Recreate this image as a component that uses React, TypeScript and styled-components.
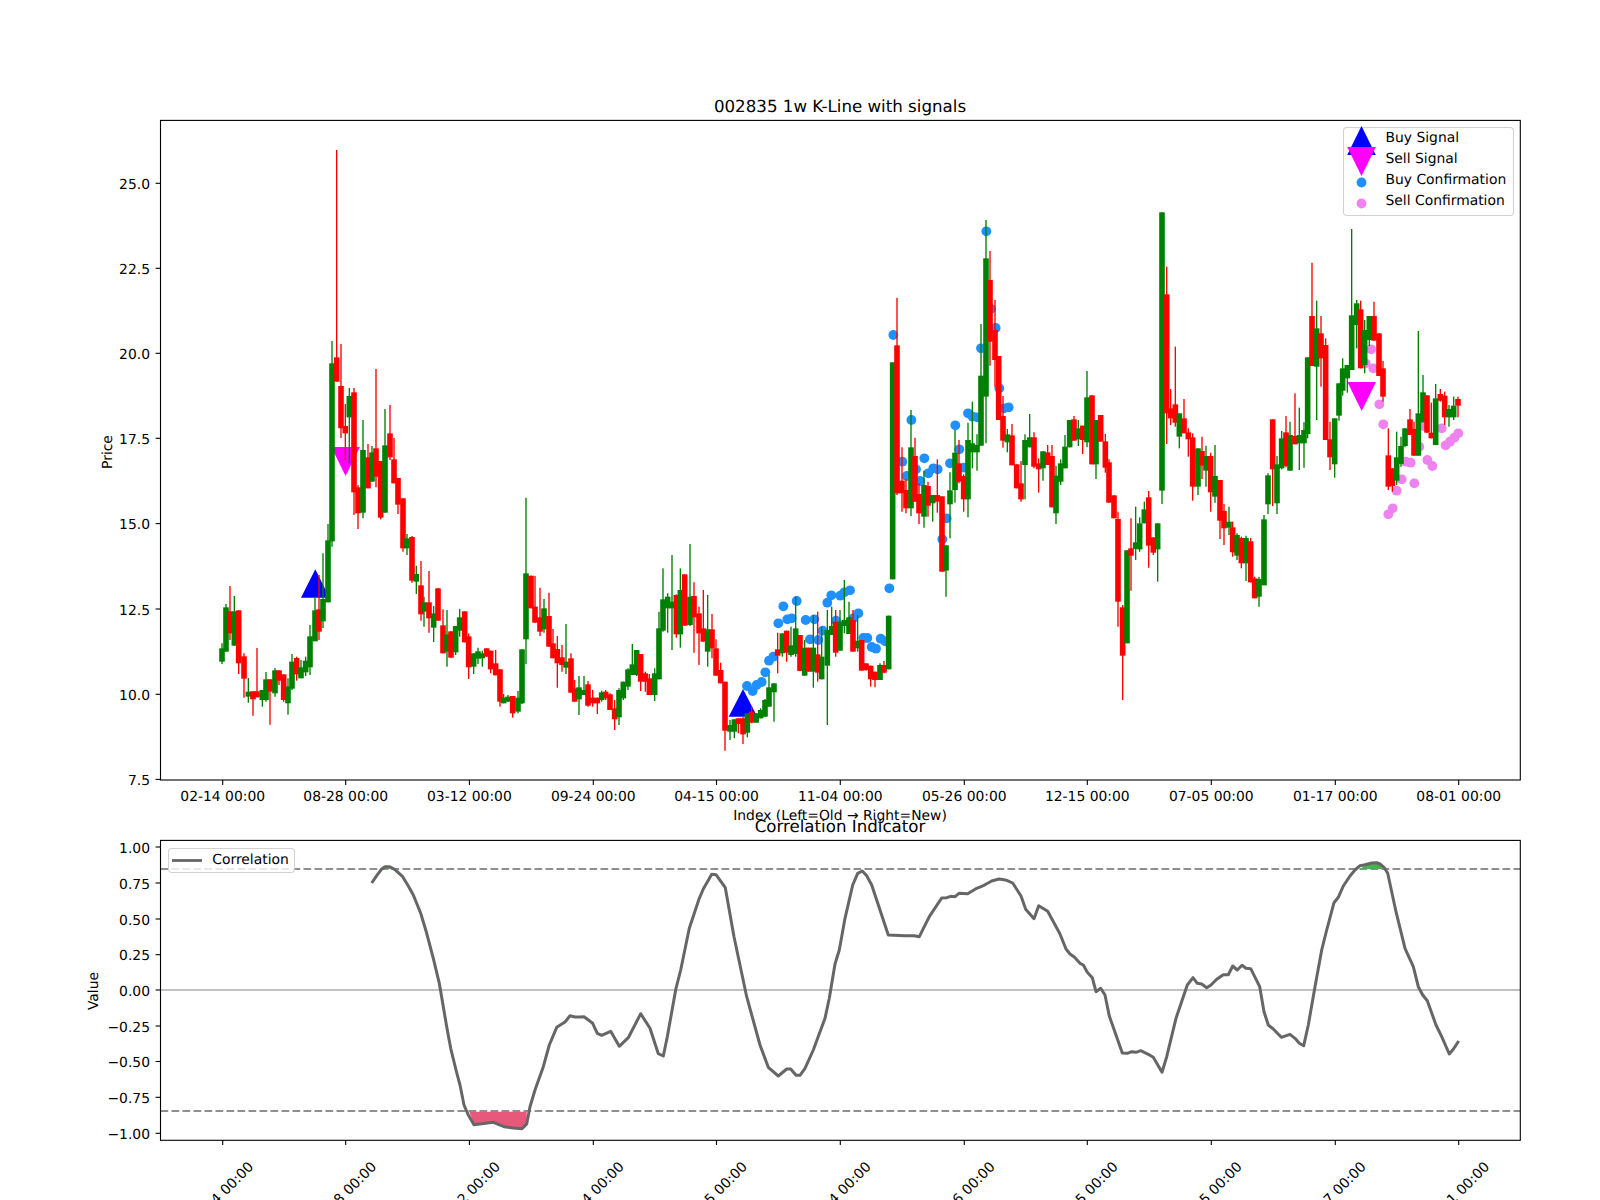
import styled, { createGlobalStyle } from 'styled-components';

type Candle = { x: number; wickTop: number; top: number; bottom: number; wickBottom: number; up: boolean };
type Point = [number, number];

const GlobalStyle = createGlobalStyle`
  html, body {
    margin: 0;
    background: #fff;
    overflow: hidden;
  }
  body {
    font-family: 'DejaVu Sans', 'Liberation Sans', sans-serif;
    color: #000;
    text-rendering: geometricPrecision;
  }
`;

const Figure = styled.main`
  width: 1600px;
  height: 1200px;
  display: flex;
  flex-direction: column;
  overflow: hidden;
  background: #fff;
`;

const Panel = styled.section<{ $height: number }>`
  position: relative;
  width: 1600px;
  height: ${({ $height }) => $height}px;
  flex: none;
`;

const Plot = styled.svg`
  display: block;
  width: 100%;
  height: 100%;
  overflow: visible;
`;

const AxesFrame = styled.rect`
  fill: none;
  stroke: #000;
  stroke-width: 1.1;
`;

const Tick = styled.line`
  stroke: #000;
  stroke-width: 1.1;
`;

const TickText = styled.text`
  font-family: 'DejaVu Sans', sans-serif;
  font-size: 13.89px;
  fill: #000;
`;

const AxisTitle = styled.text`
  font-family: 'DejaVu Sans', sans-serif;
  font-size: 16.67px;
  fill: #000;
  text-anchor: middle;
`;

const Wick = styled.line<{ $up: boolean }>`
  stroke: ${({ $up }) => ($up ? '#008000' : '#ff0000')};
  stroke-width: 1.35;
`;

const Body = styled.rect<{ $up: boolean }>`
  fill: ${({ $up }) => ($up ? '#008000' : '#ff0000')};
`;

const Threshold = styled.line`
  stroke: #8f8f8f;
  stroke-width: 2;
  stroke-dasharray: 7.7 3.3;
`;

const ZeroLine = styled.line`
  stroke: #adadad;
  stroke-width: 1.6;
`;

const Correlation = styled.polyline`
  fill: none;
  stroke: #666;
  stroke-width: 3;
  stroke-linejoin: round;
`;

const Legend = styled.div`
  position: absolute;
  box-sizing: border-box;
  background: rgba(255, 255, 255, 0.8);
  border: 1px solid rgba(204, 204, 204, 0.9);
  border-radius: 4px;
`;

const PriceLegend = styled(Legend)`
  left: 1342.5px;
  top: 127px;
  width: 171px;
  height: 88.5px;

  & > :first-child {
    margin-top: -1px;
  }
`;

const CorrelationLegend = styled(Legend)`
  left: 167.5px;
  top: 27.5px;
  width: 127px;
  height: 25px;
  display: flex;
  align-items: center;
`;

const LegendRow = styled.div`
  display: flex;
  align-items: center;
  height: 21px;
  font-size: 13.89px;
  white-space: nowrap;
`;

const LegendKey = styled.svg`
  width: 37px;
  height: 21px;
  margin-right: 5px;
  flex: none;
  overflow: visible;
`;

const LineKey = styled.svg`
  width: 30px;
  height: 21px;
  margin: 0 10.8px 0 3px;
  flex: none;
`;

const parseCandles = (x0: number, y0: number, rows: string): Candle[] =>
  rows
    .trim()
    .split('\n')
    .map((row) => {
      const [kind, ...nums] = row.trim().split(' ');
      const [z, wt, t, b, wb] = nums.map(Number);
      return {
        x: x0 + z / 3,
        wickTop: y0 + wt / 3,
        top: y0 + t / 3,
        bottom: y0 + b / 3,
        wickBottom: y0 + wb / 3,
        up: kind === 'g',
      };
    });

const pts = (x0: number, y0: number, list: string): Point[] =>
  list
    .trim()
    .split(/\s+/)
    .map((p) => {
      const [x, y] = p.split(',').map(Number);
      return [x0 + x / 3, y0 + y / 3] as Point;
    });

const toAttr = (list: Point[]) => list.map(([x, y]) => `${x.toFixed(1)},${y.toFixed(1)}`).join(' ');

const candles: Candle[] = [
  ...parseCandles(150, 400, `
    g 216 730 745 785 792
    g 228 612 622 755 755
    r 240 558 634 700 720
    g 253 588 634 737 737
    r 266 631 631 790 822
    r 282 760 769 836 893
    g 295 834 875 890 908
    r 309 874 874 898 947
    r 321 744 874 892 892
    g 337 870 870 900 920
    g 348 816 838 900 905
    r 360 838 838 875 974
    g 375 804 811 880 890
    r 387 811 811 842 855
    r 401 823 823 900 905
    g 414 835 859 910 944
    g 426 762 785 866 870
    r 440 770 774 823 842
    g 453 780 802 835 835
    g 467 770 782 817 828
    g 480 675 709 802 825
    g 495 590 631 724 724
    r 507 525 628 695 720
    g 519 460 597 664 684
    g 534 372 421 607 607
    g 546 -177 -110 424 440
    r 560 -750 -128 -55 -55
    r 573 -168 -42 85 114
    r 586 12 78 100 180
    g 598 -36 -12 52 190
    r 612 -36 -23 277 345
    r 624 255 262 340 387
    g 639 60 150 338 355
    r 654 132 172 265 265
    g 666 138 157 245 245
    r 678 -93 145 230 262
    r 692 183 183 353 358
    g 705 27 136 338 338
    r 720 15 100 172 180
    r 732 114 178 250 250
    r 744 234 234 314 342
    r 759 295 295 445 455
    g 771 402 415 445 465
    r 786 408 411 542 548
    g 799 497 522 545 582
    r 813 483 556 643 662
    g 822 590 607 635 680
    r 837 513 607 655 698
    g 851 618 640 683 726
    r 864 565 565 662 662
    r 879 628 676 760 760
    g 891 630 703 755 800
    r 903 694 694 773 773
    g 917 678 678 757 765
    g 929 627 652 692 710
    r 944 634 634 727 727
    r 956 700 709 802 837
    g 971 760 760 800 822
    g 984 743 754 776 792
    g 997 752 760 775 800
    r 1010 745 745 770 770
    r 1022 752 752 808 820
    r 1037 750 790 826 826
    r 1050 808 808 905 920
    g 1061 882 893 910 910
    g 1074 885 890 905 905
    r 1088 888 888 940 953
    g 1104 873 893 935 940
    g 1116 748 748 910 912
    g 1128 293 520 718 792
    r 1143 527 527 625 625
    r 1155 528 620 668 668
    r 1170 563 652 695 708
    g 1182 597 625 688 698
    r 1197 578 648 740 740
    r 1209 687 730 775 775
    r 1222 708 747 790 863
    r 1236 735 772 795 815
    g 1248 672 785 803 822
    r 1263 760 775 878 878
    r 1274 840 865 905 905
    g 1287 828 862 898 945
    g 1302 828 870 885 885
    r 1314 843 853 917 920
    r 1328 870 893 910 920
    r 1342 893 893 910 942
  `),
  ...parseCandles(600, 500, `
    g 5 572 577 600 605
    r 17 570 575 595 600
    r 30 580 583 630 630
    r 44 600 625 658 690
    g 57 565 570 652 675
    g 70 545 545 595 600
    g 84 505 508 560 570
    g 97 432 493 525 525
    g 110 450 450 525 528
    r 122 462 462 545 573
    r 136 515 520 545 575
    r 148 522 535 585 585
    g 164 505 520 585 603
    g 177 335 385 538 538
    g 189 205 298 392 395
    g 203 280 290 325 398
    g 216 165 305 325 450
    r 229 283 285 403 413
    g 241 205 270 403 443
    r 254 223 223 377 377
    g 270 132 290 375 378
    r 282 247 288 352 458
    r 297 320 340 400 495
    r 310 270 385 425 425
    g 323 285 388 455 500
    r 336 342 388 445 475
    r 348 418 445 527 527
    r 362 488 510 550 550
    r 375 545 545 692 752
    g 390 660 675 695 720
    g 403 658 658 695 715
    r 415 655 655 672 700
    r 429 650 655 703 732
    g 442 640 640 698 712
    r 455 620 635 668 670
    g 469 640 640 668 668
    g 482 625 630 655 655
    g 495 597 600 650 650
    g 507 525 562 620 620
    g 522 550 550 577 665
    r 533 398 448 467 520
    g 547 400 400 460 470
    r 560 392 392 458 485
    g 573 380 436 465 470
    g 587 290 385 462 470
    r 600 405 405 513 513
    g 614 420 443 527 527
    r 626 443 443 515 515
    g 640 345 443 515 563
    r 653 335 463 518 545
    g 665 380 470 538 538
    g 682 330 390 497 675
    g 695 320 378 405 405
    r 707 330 365 458 470
    g 720 330 365 452 452
    g 733 240 360 378 400
    g 747 305 352 402 402
    r 759 330 360 455 455
    g 773 345 422 445 455
    r 785 420 420 512 512
    r 798 490 490 510 512
    r 812 497 497 538 560
    r 825 515 515 540 562
    g 840 490 495 540 540
    r 852 483 495 518 520
    g 866 347 347 508 508
  `),
  ...parseCandles(860, 200, `
    g 98 487 487 1138 1138
    r 111 293 436 880 885
    r 126 742 842 880 935
    r 138 838 870 925 940
    g 153 630 742 925 948
    r 165 713 768 905 905
    r 177 850 882 940 972
    g 192 812 855 950 983
    r 204 845 858 917 950
    g 218 885 885 910 965
    r 232 778 885 905 938
    r 246 889 889 1115 1115
    g 258 1036 1036 1112 1190
    g 270 817 871 913 1015
    g 285 690 758 870 908
    r 297 720 790 845 850
    r 311 823 828 898 935
    g 324 668 720 898 952
    g 337 605 730 757 805
    g 351 703 735 757 812
    g 363 372 527 737 737
    g 378 60 175 590 730
    r 390 153 240 425 497
    r 405 300 390 480 560
    r 416 468 468 660 660
    r 429 588 648 722 743
    g 442 687 703 727 757
    r 456 672 706 796 796
    r 470 793 793 865 865
    r 483 783 850 898 905
    g 495 703 720 795 898
    g 509 642 712 742 742
    r 522 697 712 800 805
    r 536 775 790 808 878
    g 549 754 754 805 842
    r 563 735 757 795 795
    r 576 735 768 922 922
    g 588 797 827 940 972
    g 602 778 790 845 855
    g 615 705 740 805 805
    g 629 660 660 742 742
    r 642 648 658 722 722
    g 655 660 685 718 738
    r 668 677 677 720 762
    g 681 513 592 727 742
    r 696 586 586 793 793
    g 708 660 660 793 837
    r 722 645 645 725 725
    r 736 702 724 803 818
    r 747 778 787 908 908
    r 762 886 886 955 955
  `),
  ...parseCandles(1100, 380, `
    r 54 395 417 665 740
    r 68 675 682 827 960
    g 81 511 511 790 790
  `),
  ...parseCandles(860, 200, `
    r 813 955 1045 1067 1172
    g 827 920 1027 1047 1080
    g 839 952 970 1048 1055
    g 853 905 928 970 970
    r 866 873 892 1037 1103
    r 880 1012 1012 1058 1065
    g 893 970 970 1048 1145
    g 906 37 37 872 912
    r 920 200 283 640 732
    r 932 567 625 655 675
    r 946 440 613 668 680
    g 958 640 640 710 745
  `),
  ...parseCandles(1100, 380, `
    r 252 57 115 160 160
    r 265 145 157 178 230
    r 278 160 172 320 362
    g 294 205 205 320 345
    r 306 170 213 257 297
    g 318 197 228 272 320
    r 332 218 228 337 395
    g 345 195 288 350 368
    r 360 300 300 422 477
    r 372 372 393 445 495
    g 387 380 425 443 465
    r 398 425 442 517 530
    g 411 460 465 527 540
    r 424 470 474 550 565
    g 438 467 474 550 603
    r 452 474 484 607 607
    r 464 590 595 655 655
    g 477 590 597 650 680
    g 492 405 418 616 616
    g 504 280 286 373 402
    r 518 118 118 268 378
    g 531 228 253 370 402
    g 545 153 175 265 268
    r 558 108 157 258 262
    g 570 125 165 272 272
    r 585 40 168 193 193
    g 598 83 165 190 270
    g 612 127 150 190 263
  `),
  ...parseCandles(1290, 210, `
    g 53 442 442 672 685
    r 66 158 318 468 468
    g 80 272 355 470 630
    r 93 318 370 445 530
    r 107 385 405 690 690
    r 120 635 688 742 780
    g 134 625 625 763 803
    g 147 520 520 617 632
    g 158 445 475 542 557
    g 172 465 465 505 548
    g 185 57 316 480 480
    g 200 270 280 345 415
    r 212 272 298 475 475
    g 224 330 360 465 490
    g 238 318 318 390 408
    r 252 275 318 392 392
    r 267 370 370 498 498
    r 279 453 475 560 575
    r 295 655 736 830 840
    r 307 775 775 828 845
    g 320 665 742 812 825
    g 333 680 708 762 770
    g 345 655 655 708 712
    r 360 597 628 675 675
    r 372 635 657 737 737
    g 385 363 610 737 737
    g 399 495 547 637 637
    r 411 556 556 668 668
    r 424 578 668 685 685
    g 437 522 565 705 705
    r 451 537 552 572 575
    r 464 545 557 622 645
    g 477 585 597 622 650
    g 491 560 587 622 630
    r 504 560 567 587 622
  `),
];

const buyDots: Point[] = [
  ...pts(600, 500, `441,558 458,573 470,555 485,546 496,517 507,482 520,470 535,370 550,319 562,358 575,355
    590,303 617,360 630,418 643,358 655,420 668,392 682,308 694,286 708,362 721,287 733,277 750,271 760,355
    775,340 790,414 802,414 815,441 828,446 842,416 856,424 868,265`),
  ...pts(860, 200, `100,405 127,785 140,828 154,660 168,808 180,843 193,775 205,820 220,805 233,808 260,955
    247,1018 270,790 286,676 298,748 312,803 324,640 338,650 352,652 363,445 379,94 393,327 407,384 418,565
    432,625 446,622`),
];

const sellDots: Point[] = pts(1200, 330, `513,58 497,100 520,115 538,223 550,283 565,553 578,535 590,482 605,448
  617,395 632,398 643,460 658,350 670,288 682,390 697,408 725,295 737,346 750,335 763,323 775,310`);

const corrLine: Point[] = [
  ...pts(80, 810, `875,219 890,197 905,177 915,170 928,170 945,179 968,200 985,228 1000,255 1022,310 1040,370
    1060,445 1078,520 1090,590 1100,650 1112,715 1128,780 1140,825 1152,885 1165,915 1182,944 1205,941 1240,937
    1272,950 1300,954 1326,956 1340,942 1350,890 1365,840 1390,770 1408,705 1430,652 1455,636 1470,617 1485,621`),
  ...pts(580, 810, `0,621 12,620 38,640 52,670 65,676 92,664 118,709 145,683 182,611 210,655 235,731 250,738
    262,680 288,535 302,480 328,355 358,265 370,237 395,193 408,194 436,233 462,380 500,560 540,705 565,772
    595,798 620,777 632,777 648,796 660,796 675,775 700,720 735,625 748,565 765,462 778,420 795,325 818,225
    833,190 847,183 860,197 875,225 925,375 975,377 1003,377 1018,380 1048,320 1085,264 1100,263 1112,259
    1125,260 1137,250 1163,251 1190,235 1212,226 1235,213 1257,207 1280,211 1298,219 1323,258 1337,298
    1362,326 1376,287 1403,304 1440,372 1458,417 1470,432 1483,441`),
  ...pts(1080, 810, `0,460 10,465 22,487 37,503 48,545 62,535 75,555 88,618 127,729 142,730 155,725 168,727
    182,722 205,733 220,742 246,787 260,740 288,625 322,525 339,503 352,520 365,522 380,533 393,525 410,508
    430,494 445,494 458,468 472,480 486,466 498,475 512,476 539,530 552,605 565,645 580,657 604,682 630,673
    645,685 658,700 671,707 685,645 705,530 725,420 740,360 762,278 775,262 790,228 810,198 825,180 840,167
    855,164 875,159 890,158 900,162 912,172 923,190 948,305 975,415 1000,470 1015,530 1028,555 1042,572
    1068,645 1085,680 1108,732 1120,718 1136,693`),
];

const lowFill = pts(80, 810, '1168,905 1340,905 1340,942 1326,956 1300,954 1272,950 1240,937 1205,941 1182,944');
const highFill = pts(1080, 810, '842,177 908,177 900,162 890,158 875,159 855,164');
const firstPeakFill = pts(80, 810, '912,177 930,177 922,170');

const dateTicks: [number, string][] = [
  [222.7, '02-14 00:00'],
  [345.7, '08-28 00:00'],
  [469.4, '03-12 00:00'],
  [593.3, '09-24 00:00'],
  [716.5, '04-15 00:00'],
  [840.3, '11-04 00:00'],
  [964.3, '05-26 00:00'],
  [1087.3, '12-15 00:00'],
  [1211.3, '07-05 00:00'],
  [1335.3, '01-17 00:00'],
  [1458.7, '08-01 00:00'],
];

const priceTicks: [number, string][] = [
  [183.3, '25.0'],
  [268.3, '22.5'],
  [353.3, '20.0'],
  [438.3, '17.5'],
  [523.6, '15.0'],
  [609, '12.5'],
  [694.3, '10.0'],
  [779.4, '7.5'],
];

const valueTicks: [number, string][] = [
  [847, '1.00'],
  [883, '0.75'],
  [919, '0.50'],
  [954.7, '0.25'],
  [990, '0.00'],
  [1026, '−0.25'],
  [1061.5, '−0.50'],
  [1097.3, '−0.75'],
  [1133.3, '−1.00'],
];

const YAxis = ({ ticks, labelX, labelY, label }: { ticks: [number, string][]; labelX: number; labelY: number; label: string }) => (
  <>
    {ticks.map(([y, text]) => (
      <g key={text}>
        <Tick x1={155.6} x2={160.5} y1={y} y2={y} />
        <TickText x={150} y={y + 5.5} textAnchor='end'>
          {text}
        </TickText>
      </g>
    ))}
    <TickText x={labelX} y={labelY} textAnchor='middle' transform={`rotate(-90 ${labelX} ${labelY})`}>
      {label}
    </TickText>
  </>
);

const triangle = (cx: number, apexY: number, baseY: number) =>
  `${cx},${apexY} ${cx - 14.3},${baseY} ${cx + 14.3},${baseY}`;

const App = () => (
  <>
    <GlobalStyle />
    <Figure>
      <Panel $height={820}>
        <Plot viewBox='0 0 1600 820'>
          <AxisTitle x={840} y={112}>
            002835 1w K-Line with signals
          </AxisTitle>
          <polygon points={triangle(315.3, 569.3, 597.7)} fill='#0000ff' />
          <polygon points={triangle(743, 689, 716.7)} fill='#0000ff' />
          <polygon points={triangle(345.6, 476, 447)} fill='#ff00ff' />
          <polygon points={triangle(1361.7, 411, 382)} fill='#ff00ff' />
          {buyDots.map(([x, y], i) => (
            <circle key={i} cx={x} cy={y} r={4.9} fill='#1e90ff' />
          ))}
          {sellDots.map(([x, y], i) => (
            <circle key={i} cx={x} cy={y} r={4.9} fill='#ee82ee' />
          ))}
          {candles.map((c, i) => (
            <g key={i}>
              <Wick $up={c.up} x1={c.x} x2={c.x} y1={c.wickTop} y2={c.wickBottom} />
              <Body $up={c.up} x={c.x - 2.8} y={c.top} width={5.6} height={c.bottom - c.top} />
            </g>
          ))}
          <AxesFrame x={160.5} y={120.4} width={1359.8} height={659.6} />
          <YAxis ticks={priceTicks} labelX={112} labelY={452} label='Price' />
          {dateTicks.map(([x, text]) => (
            <g key={text}>
              <Tick x1={x} x2={x} y1={780} y2={785} />
              <TickText x={x} y={801} textAnchor='middle'>
                {text}
              </TickText>
            </g>
          ))}
          <TickText x={840} y={820} textAnchor='middle'>
            Index (Left=Old → Right=New)
          </TickText>
        </Plot>
        <PriceLegend>
          <LegendRow>
            <LegendKey viewBox='0 0 37 21'>
              <polygon points={triangle(17.5, -1, 28)} fill='#0000ff' />
            </LegendKey>
            Buy Signal
          </LegendRow>
          <LegendRow>
            <LegendKey viewBox='0 0 37 21'>
              <polygon points={triangle(17.5, 28, -1)} fill='#ff00ff' />
            </LegendKey>
            Sell Signal
          </LegendRow>
          <LegendRow>
            <LegendKey viewBox='0 0 37 21'>
              <circle cx={17.5} cy={13.5} r={4.9} fill='#1e90ff' />
            </LegendKey>
            Buy Confirmation
          </LegendRow>
          <LegendRow>
            <LegendKey viewBox='0 0 37 21'>
              <circle cx={17.5} cy={13.5} r={4.9} fill='#ee82ee' />
            </LegendKey>
            Sell Confirmation
          </LegendRow>
        </PriceLegend>
      </Panel>
      <Panel $height={380}>
        <Plot viewBox='0 820 1600 380'>
          <AxisTitle x={840} y={832}>
            Correlation Indicator
          </AxisTitle>
          <ZeroLine x1={160.5} x2={1520} y1={990} y2={990} />
          <Threshold x1={160.5} x2={1520} y1={869} y2={869} />
          <Threshold x1={160.5} x2={1520} y1={1111} y2={1111} />
          <polygon points={toAttr(lowFill)} fill='#e8587a' />
          <polygon points={toAttr(highFill)} fill='#4caf50' />
          <polygon points={toAttr(firstPeakFill)} fill='#4caf50' />
          <Correlation points={toAttr(corrLine)} />
          <AxesFrame x={160.5} y={840.4} width={1359.8} height={299.9} />
          <YAxis ticks={valueTicks} labelX={98} labelY={991} label='Value' />
          {dateTicks.map(([x, text]) => (
            <g key={text}>
              <Tick x1={x} x2={x} y1={1140} y2={1145} />
              <TickText x={x - 2} y={1199} textAnchor='middle' transform={`rotate(-45 ${x - 2} 1194)`}>
                {text}
              </TickText>
            </g>
          ))}
        </Plot>
        <CorrelationLegend>
          <LineKey viewBox='0 0 30 21'>
            <line x1={0} x2={30} y1={10.5} y2={10.5} stroke='#666' strokeWidth={2.8} />
          </LineKey>
          <LegendRow>Correlation</LegendRow>
        </CorrelationLegend>
      </Panel>
    </Figure>
  </>
);

export default App;
